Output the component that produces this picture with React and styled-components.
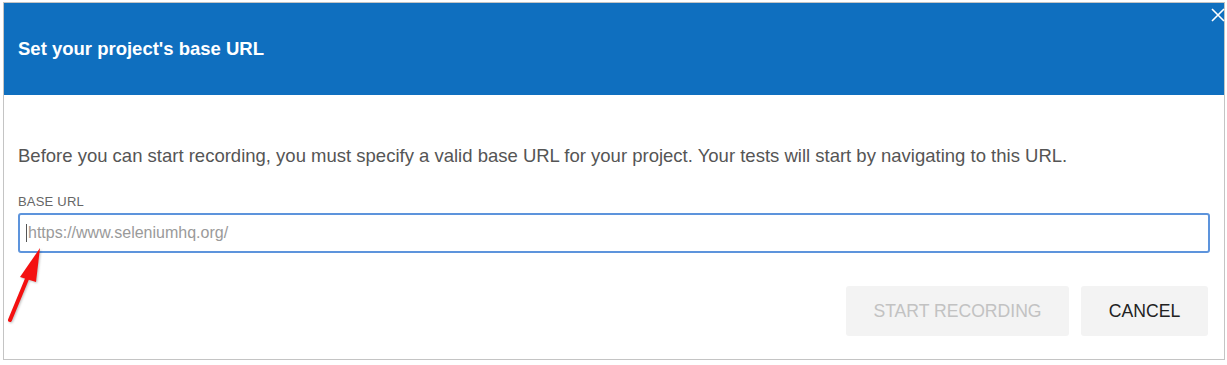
import React from "react";
import styled, {createGlobalStyle} from "styled-components";

const GlobalStyle = createGlobalStyle`
  html, body {
    margin: 0;
    padding: 0;
    background: #ffffff;
    font-family: "Liberation Sans", Arial, sans-serif;
  }
`;

const Page = styled.div`
  position: relative;
  width: 1227px;
  height: 365px;
  padding: 2px 0 0 3px;
  box-sizing: border-box;
`;

const Modal = styled.div`
  position: relative;
  width: 1222px;
  height: 358px;
  box-sizing: border-box;
  border: 1px solid #c4c4c4;
  display: flex;
  flex-direction: column;
`;

const Header = styled.div`
  height: 92px;
  background-color: #0f6fbf;
  display: flex;
  align-items: center;
  padding: 0 14px;
`;

const Title = styled.h1`
  margin: 0;
  font-size: 18.5px;
  font-weight: 700;
  color: #ffffff;
`;

const CloseButton = styled.button`
  position: absolute;
  top: 4px;
  right: -2px;
  width: 16px;
  height: 16px;
  padding: 0;
  border: none;
  background: transparent;
  display: flex;
  align-items: center;
  justify-content: center;
  cursor: pointer;
`;

const Body = styled.div`
  padding: 50px 14px 0;
  display: flex;
  flex-direction: column;
`;

const Description = styled.p`
  margin: 0;
  font-size: 18.5px;
  line-height: 22px;
  color: #555555;
`;

const FieldLabel = styled.label`
  margin-top: 27px;
  font-size: 13px;
  line-height: 16px;
  letter-spacing: 0.2px;
  color: #666666;
`;

const InputWrap = styled.div`
  position: relative;
  margin-top: 3px;
`;

const Input = styled.input`
  width: 100%;
  height: 40px;
  box-sizing: border-box;
  border: 2px solid #5d94dc;
  border-radius: 3px;
  padding: 0 8px;
  font-family: "Liberation Sans", Arial, sans-serif;
  font-size: 16px;
  color: #333;
  outline: none;

  &::placeholder {
    color: #9a9a9a;
  }
`;

const Caret = styled.span`
  position: absolute;
  left: 8px;
  top: 11px;
  width: 1px;
  height: 18px;
  background: #555;
`;

const Actions = styled.div`
  margin-top: 33px;
  margin-right: 2px;
  display: flex;
  justify-content: flex-end;
  gap: 12px;
`;

const Button = styled.button`
  height: 50px;
  width: ${(p) => p.$width}px;
  border: none;
  border-radius: 3px;
  background-color: #f3f3f3;
  font-family: "Liberation Sans", Arial, sans-serif;
  font-size: 17.6px;
  color: ${(p) => (p.disabled ? "#c2c2c2" : "#222222")};
  cursor: ${(p) => (p.disabled ? "default" : "pointer")};
`;

const Annotation = styled.svg`
  position: absolute;
  left: 0;
  top: 0;
  pointer-events: none;
  filter: drop-shadow(1px 1px 1px rgba(0, 0, 0, 0.25));
`;

const App = () => (
  <>
    <GlobalStyle />
    <Page>
      <Modal>
        <Header>
          <Title>Set your project's base URL</Title>
        </Header>
        <CloseButton aria-label="close">
          <svg width="14" height="14" viewBox="0 0 14 14">
            <path d="M1 1L13 13M13 1L1 13" stroke="#ffffff" strokeWidth="1.6" />
          </svg>
        </CloseButton>
        <Body>
          <Description>
            Before you can start recording, you must specify a valid base URL for your project. Your tests will start by navigating to this URL.
          </Description>
          <FieldLabel>BASE URL</FieldLabel>
          <InputWrap>
            <Input placeholder="https://www.seleniumhq.org/" />
            <Caret />
          </InputWrap>
          <Actions>
            <Button $width={223} disabled>START RECORDING</Button>
            <Button $width={127}>CANCEL</Button>
          </Actions>
        </Body>
      </Modal>
      <Annotation width="60" height="340">
        <line x1="10" y1="320" x2="29" y2="274" stroke="#f41010" strokeWidth="4" strokeLinecap="round" />
        <polygon points="40,248 36,282 20,277" fill="#f41010" />
      </Annotation>
    </Page>
  </>
);

export default App;
